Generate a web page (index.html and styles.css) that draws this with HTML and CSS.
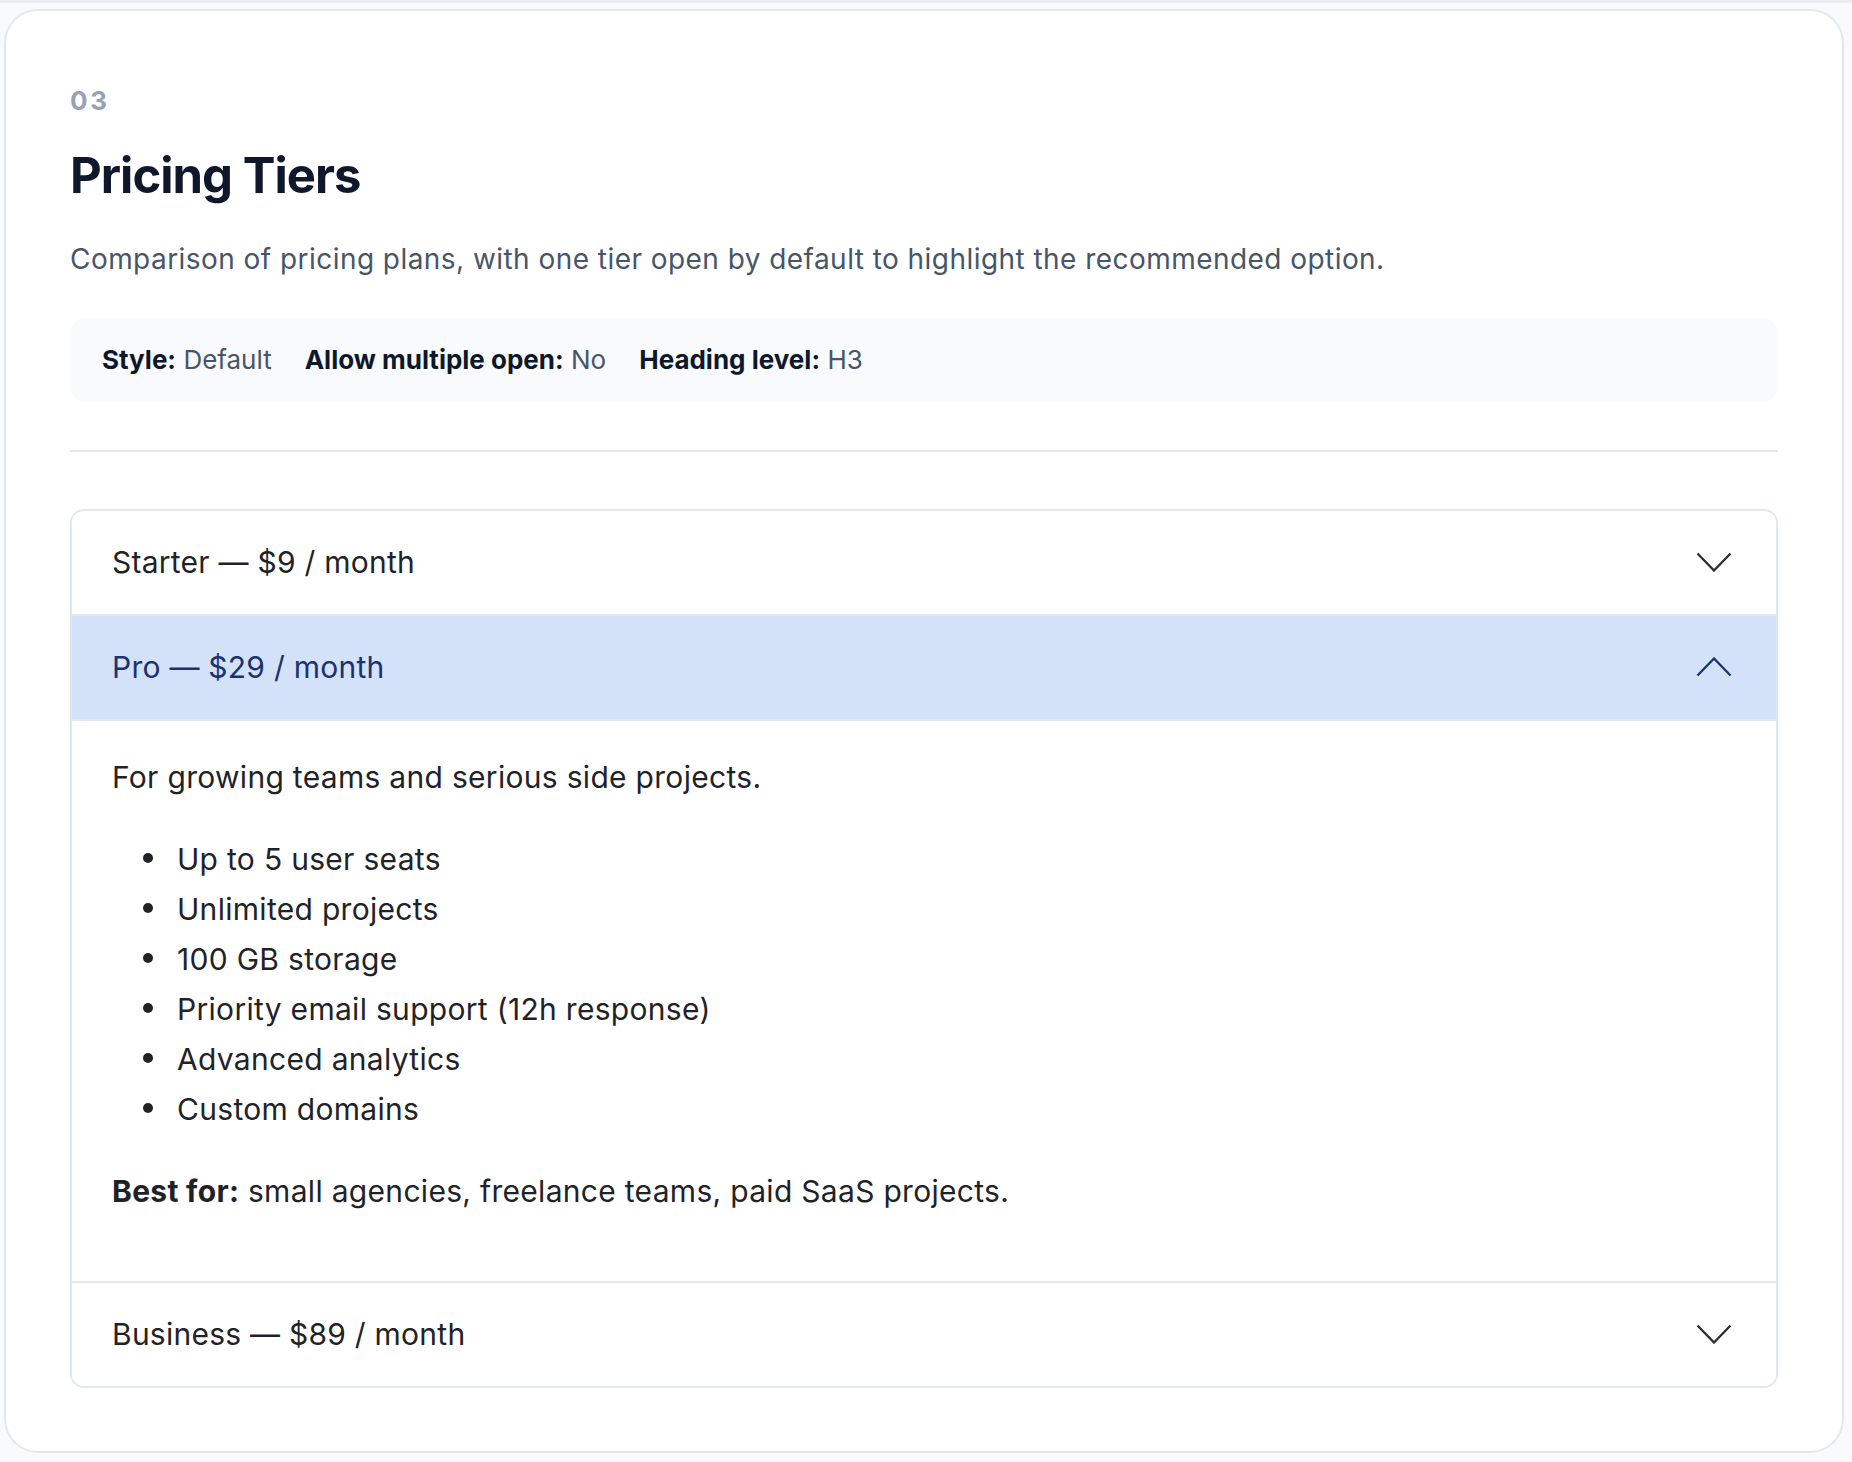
FILE: index.html
```html
<!DOCTYPE html>
<html lang="en">
<head>
  <meta charset="UTF-8">
  <meta name="viewport" content="width=device-width, initial-scale=1.0">
  <title>Pricing Tiers</title>
  <link rel="stylesheet" href="styles.css">
</head>
<body>
  <section class="demo-card">
    <div class="demo-head">
      <div class="demo-index">03</div>
      <h2 class="demo-title">Pricing Tiers</h2>
      <p class="demo-desc">Comparison of pricing plans, with one tier open by default to highlight the recommended option.</p>
      <div class="demo-meta">
        <span><b>Style:</b> Default</span>
        <span><b>Allow multiple open:</b> No</span>
        <span><b>Heading level:</b> H3</span>
      </div>
    </div>

    <div class="accordion">
      <div class="acc-item">
        <h3 class="acc-heading">
          <button class="acc-toggle">
            <span>Starter — $9 / month</span>
            <svg class="chevron" width="36" height="20" viewBox="0 0 36 20"><polyline points="1.5,1.5 18,18.5 34.5,1.5"/></svg>
          </button>
        </h3>
      </div>

      <div class="acc-item open">
        <h3 class="acc-heading">
          <button class="acc-toggle">
            <span>Pro — $29 / month</span>
            <svg class="chevron" width="36" height="20" viewBox="0 0 36 20"><polyline points="1.5,1.5 18,18.5 34.5,1.5"/></svg>
          </button>
        </h3>
        <div class="acc-panel">
          <p>For growing teams and serious side projects.</p>
          <ul>
            <li>Up to 5 user seats</li>
            <li>Unlimited projects</li>
            <li>100 GB storage</li>
            <li>Priority email support (12h response)</li>
            <li>Advanced analytics</li>
            <li>Custom domains</li>
          </ul>
          <p><b>Best for:</b> small agencies, freelance teams, paid SaaS projects.</p>
        </div>
      </div>

      <div class="acc-item">
        <h3 class="acc-heading">
          <button class="acc-toggle">
            <span>Business — $89 / month</span>
            <svg class="chevron" width="36" height="20" viewBox="0 0 36 20"><polyline points="1.5,1.5 18,18.5 34.5,1.5"/></svg>
          </button>
        </h3>
      </div>
    </div>
  </section>
</body>
</html>
```

FILE: styles.css
```css
html {
  background: #f8fafc;
}
body {
  margin: 0;
  padding: 9px 8px 9px 4px;
  border-top: 3px solid #e9edf2;
  font-family: Inter, "Noto Sans", Arial, sans-serif;
  color: #1f2328;
}
.demo-card {
  box-sizing: border-box;
  width: 1840px;
  margin-top: -3px;
  padding: 74px 64px 63px;
  background: #fff;
  border: 2px solid #e2e8f0;
  border-radius: 34px;
}
.demo-head {
  padding-bottom: 48px;
  border-bottom: 2px solid #e2e8f0;
  margin-bottom: 57px;
}
.demo-index {
  font-size: 26px;
  line-height: 32px;
  font-weight: 700;
  letter-spacing: 0.1em;
  color: #94a3b8;
}
.demo-title {
  margin: 29px 0 0;
  font-size: 49px;
  line-height: 60px;
  font-weight: 700;
  letter-spacing: -0.02em;
  color: #0f172a;
}
.demo-desc {
  margin: 33px 0 0;
  font-size: 28px;
  line-height: 40px;
  letter-spacing: 0.45px;
  color: #475569;
}
.demo-meta {
  display: flex;
  gap: 33px;
  margin-top: 39px;
  padding: 22px 32px;
  background: #f8fafc;
  border-radius: 16px;
  font-size: 26px;
  line-height: 40px;
  color: #475569;
}
.demo-meta b {
  color: #0f172a;
}
.accordion {
  border: 2px solid #e2e8f0;
  border-radius: 14px;
  overflow: hidden;
}
.acc-item + .acc-item {
  border-top: 2px solid #e2e8f0;
}
.acc-heading {
  margin: 0;
  font-size: 30px;
  font-weight: 400;
}
.acc-toggle {
  display: flex;
  align-items: center;
  justify-content: space-between;
  width: 100%;
  padding: 30px 44px 31px 40px;
  border: 0;
  background: #fff;
  font: inherit;
  line-height: 42px;
  letter-spacing: 0.25px;
  color: #1f2328;
  text-align: left;
  cursor: pointer;
}
.chevron {
  fill: none;
  stroke: #2b2d31;
  stroke-width: 2.3;
}
.open .acc-toggle {
  background: #d3e1f9;
  color: #1c3270;
  border-bottom: 2px solid #e2e8f0;
}
.open .chevron {
  stroke: #1c3270;
  transform: rotate(180deg);
}
.acc-panel {
  padding: 31px 40px 33px;
  font-size: 30px;
  line-height: 50px;
  letter-spacing: 0.3px;
  color: #1f2328;
}
.acc-panel p {
  margin: 0 0 32px;
}
.acc-panel ul {
  margin: 0 0 32px;
  padding-left: 65px;
  list-style: none;
}
.acc-panel li::before {
  content: "";
  display: inline-block;
  width: 10px;
  height: 10px;
  margin: 0 24px 0 -34px;
  border-radius: 50%;
  background: currentColor;
  vertical-align: 0.22em;
}
```
